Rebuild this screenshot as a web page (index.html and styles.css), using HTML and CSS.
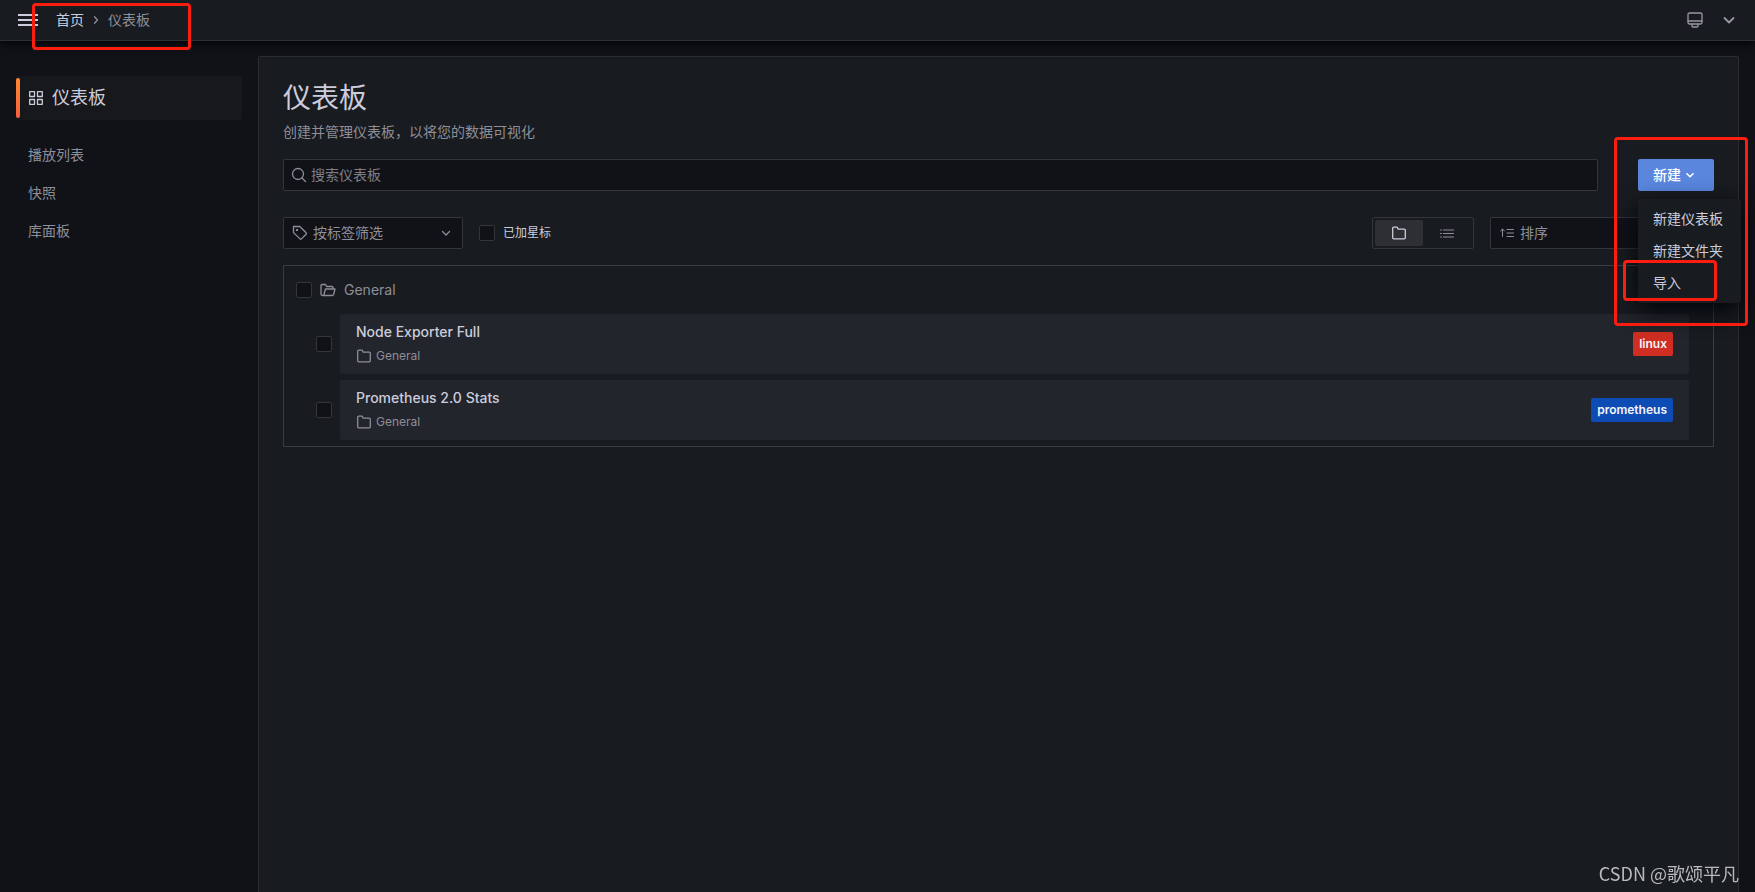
FILE: index.html
```html
<!DOCTYPE html>
<html lang="zh-CN">
<head>
    <meta charset="utf-8">
    <title>仪表板</title>
    <link rel="stylesheet" href="styles.css">
</head>
<body>

<!-- shared icons -->
<svg class="sprite" aria-hidden="true">
    <symbol id="i-down" viewBox="0 0 16 16">
        <path d="M4.500 6.500L8 10l3.500-3.500"/>
    </symbol>
    <symbol id="i-folder" viewBox="0 0 16 16">
        <path d="M1.700 3.200a1 1 0 0 1 1-1H6l1.200 2h6.100a1 1 0 0 1 1 1v7.600a1 1 0 0 1-1 1H2.700a1 1 0 0 1-1-1z"/>
    </symbol>
</svg>

<header class="topbar">
    <button class="icon-btn" aria-label="菜单">
        <svg class="menu-icon" viewBox="0 0 20 12"><path d="M0 1h20M0 6h20M0 11h20"/></svg>
    </button>
    <nav class="breadcrumb">
        <a href="#" class="home">首页</a>
        <svg class="icon sep" viewBox="0 0 16 16"><path d="M6.500 4.800L9.500 8l-3 3.200"/></svg>
        <a href="#">仪表板</a>
        <span class="mark mark-crumb"></span>
    </nav>
    <div class="top-actions">
        <button class="icon-btn" aria-label="显示器">
            <svg class="icon" viewBox="0 0 16 16"><rect x="1" y="1" width="14" height="11" rx="1.500"/><path d="M1 9h14M5 12.200v1.800a1 1 0 0 0 1 1h4a1 1 0 0 0 1-1v-1.800"/></svg>
        </button>
        <button class="icon-btn" aria-label="展开">
            <svg class="icon chev" viewBox="0 0 16 16"><path d="M3.500 6L8 10.500 12.500 6"/></svg>
        </button>
    </div>
</header>

<div class="page">
    <aside class="sidebar">
        <a href="#" class="side-title">
            <svg class="icon" viewBox="0 0 16 16"><path d="M1.700 1.700h4.800v4.800H1.700zM9.500 1.700h4.800v4.800H9.500zM1.700 9.500h4.800v4.800H1.700zM9.500 9.500h4.800v4.800H9.500z"/></svg>
            仪表板
        </a>
        <nav class="side-nav">
            <a href="#">播放列表</a>
            <a href="#">快照</a>
            <a href="#">库面板</a>
        </nav>
    </aside>

    <main class="panel">
        <h1>仪表板</h1>
        <p class="subtitle">创建并管理仪表板，以将您的数据可视化</p>

        <div class="search-row">
            <div class="field search">
                <svg class="icon" viewBox="0 0 16 16"><circle cx="7" cy="7" r="5.500"/><path d="M11 11l3.500 3.500"/></svg>
                <input type="text" placeholder="搜索仪表板" aria-label="搜索仪表板">
            </div>
            <div class="new">
                <button class="new-btn">新建<svg class="icon" aria-hidden="true"><use href="#i-down"/></svg></button>
                <div class="menu">
                    <a href="#">新建仪表板</a>
                    <a href="#">新建文件夹</a>
                    <a href="#">导入</a>
                    <span class="mark mark-import"></span>
                </div>
                <span class="mark mark-new"></span>
            </div>
        </div>

        <div class="filter-row">
            <div class="field tags">
                <svg class="icon" viewBox="0 0 16 16"><path d="M1.500 1.500h6.300l6.300 6.300a1 1 0 0 1 0 1.400l-4.700 4.700a1 1 0 0 1-1.400 0L1.500 7.600z"/><path d="M4.600 4.600h.8v.8h-.8z"/></svg>
                <select aria-label="按标签筛选"><option>按标签筛选</option></select>
                <svg class="icon" aria-hidden="true"><use href="#i-down"/></svg>
            </div>
            <label class="starred"><input type="checkbox">已加星标</label>
            <div class="layout">
                <label>
                    <input type="radio" name="layout" aria-label="文件夹视图" checked>
                    <svg class="icon" aria-hidden="true"><use href="#i-folder"/></svg>
                </label>
                <label>
                    <input type="radio" name="layout" aria-label="列表视图">
                    <svg class="icon thin" viewBox="0 0 16 16"><path d="M1.500 5h1M4.500 5h10M1.500 8.500h1M4.500 8.500h10M1.500 12h1M4.500 12h10"/></svg>
                </label>
            </div>
            <div class="field sort">
                <svg class="icon thin" viewBox="0 0 16 16"><path d="M3.500 11.500v-7M1.500 6l2-2 2 2M8 4.500h6.500M8 8h6.500M8 11.500h6.500"/></svg>
                <select aria-label="排序"><option>排序</option></select>
            </div>
        </div>

        <section class="folder">
            <div class="folder-head">
                <input type="checkbox" aria-label="General">
                <svg class="icon" viewBox="0 0 16 16"><path d="M2.500 13.500a1.500 1.500 0 0 1-1.500-1.500V3.500a1 1 0 0 1 1-1h3.500l1.200 2h5.300a1 1 0 0 1 1 1V7M2.500 13.500c.7 0 1.200-.4 1.400-1L5.500 7H15l-1.400 5.500c-.2.600-.6 1-1.300 1z"/></svg>
                <span>General</span>
            </div>
            <div class="item">
                <input type="checkbox" aria-label="Node Exporter Full">
                <div class="card">
                    <div>
                        <a href="#" class="name">Node Exporter Full</a>
                        <div class="loc"><svg class="icon" aria-hidden="true"><use href="#i-folder"/></svg>General</div>
                    </div>
                    <a href="#" class="tag red">linux</a>
                </div>
            </div>
            <div class="item">
                <input type="checkbox" aria-label="Prometheus 2.0 Stats">
                <div class="card">
                    <div>
                        <a href="#" class="name">Prometheus 2.0 Stats</a>
                        <div class="loc"><svg class="icon" aria-hidden="true"><use href="#i-folder"/></svg>General</div>
                    </div>
                    <a href="#" class="tag blue">prometheus</a>
                </div>
            </div>
        </section>
    </main>
</div>

<div class="watermark">CSDN @歌颂平凡</div>

</body>
</html>
```

FILE: styles.css
```css
* {
    box-sizing: border-box;
}
body {
    display: flex;
    flex-direction: column;
    min-height: 100vh;
    margin: 0;
    background: #111217;
    color: #ccccdc;
    font-family: Inter, "Noto Sans CJK SC", sans-serif;
    font-size: 14px;
    line-height: 22px;
}
a {
    color: inherit;
    text-decoration: none;
}
button, input, select {
    margin: 0;
    font: inherit;
    color: inherit;
}
.sprite {
    position: absolute;
    width: 0;
    height: 0;
}
.icon {
    flex: none;
    width: 16px;
    height: 16px;
    fill: none;
    stroke: currentColor;
    stroke-width: 1.3;
    stroke-linecap: round;
    stroke-linejoin: round;
}
.thin {
    stroke-width: 1;
}

/* top bar */
.topbar {
    position: relative;
    z-index: 1;
    display: flex;
    align-items: center;
    height: 41px;
    padding: 0 18px;
    background: #181b1f;
    border-bottom: 1px solid #2f3034;
    box-shadow: 0 3px 8px #010409;
}
.icon-btn {
    display: flex;
    padding: 0;
    background: none;
    border: none;
}
.menu-icon {
    width: 20px;
    height: 12px;
    stroke: #ccccdc;
    stroke-width: 2;
}
.breadcrumb {
    position: relative;
    display: flex;
    align-items: center;
    gap: 4px;
    margin-left: 18px;
    color: #8e8e99;
}
.breadcrumb .home {
    color: #ccccdc;
}
.top-actions {
    display: flex;
    gap: 18px;
    margin-left: auto;
    color: #9898a4;
}
.chev {
    stroke-width: 1.8;
}

/* sidebar */
.page {
    display: flex;
    flex: 1;
    gap: 16px;
    padding: 15px 16px 0;
}
.sidebar {
    width: 226px;
    padding-top: 20px;
}
.side-title {
    position: relative;
    display: flex;
    align-items: center;
    gap: 8px;
    height: 44px;
    padding-left: 12px;
    background: #17181b;
    border-radius: 2px;
    font-size: 18px;
}
.side-title::before {
    content: "";
    position: absolute;
    left: 0;
    top: 2px;
    bottom: 2px;
    width: 4px;
    border-radius: 2px;
    background: linear-gradient(#ff8833, #f55f3e);
}
.side-nav {
    display: flex;
    flex-direction: column;
    gap: 16px;
    padding: 24px 12px;
    color: #8e8e99;
}

/* content */
.panel {
    flex: 1;
    padding: 24px;
    background: #181b1f;
    border: 1px solid #2b2c31;
    border-bottom: none;
    border-radius: 2px 2px 0 0;
}
h1 {
    margin: 0;
    font-size: 28px;
    font-weight: 400;
    line-height: 34px;
}
.subtitle {
    margin: 6px 0 16px;
    color: #8e8e99;
}
.search-row, .filter-row {
    display: flex;
    align-items: center;
}
.search-row {
    gap: 40px;
}
.filter-row {
    gap: 16px;
    margin: 26px 0 16px;
}
.field {
    display: flex;
    align-items: center;
    gap: 5px;
    height: 32px;
    padding: 0 8px;
    background: #111217;
    border: 1px solid #34353a;
    border-radius: 2px;
    color: #8e8e99;
}
.field input, .field select {
    flex: 1;
    min-width: 0;
    padding: 0;
    background: none;
    border: none;
    outline: none;
    appearance: none;
}
.field input::placeholder {
    color: #7d7e87;
}
.search {
    flex: 1;
    gap: 4px;
    padding: 0 7px;
}
.tags {
    width: 180px;
}
.sort {
    width: 224px;
}
input[type="checkbox"] {
    flex: none;
    width: 16px;
    height: 16px;
    appearance: none;
    background: #111217;
    border: 1px solid #34353a;
    border-radius: 2px;
}
input[type="checkbox"]:checked {
    background: #5a86de;
}
.starred {
    display: flex;
    align-items: center;
    gap: 8px;
    font-size: 12px;
}
.layout {
    display: flex;
    height: 32px;
    margin-left: auto;
    padding: 2px;
    border: 1px solid #34353a;
    border-radius: 2px;
    color: #8e8e99;
}
.layout label {
    position: relative;
    display: flex;
    align-items: center;
    justify-content: center;
    width: 48px;
    border-radius: 2px;
}
.layout input {
    position: absolute;
    opacity: 0;
}
.layout label:has(:checked) {
    background: #2d2f34;
    color: #ccccdc;
}

/* new button and its menu */
.new {
    position: relative;
    z-index: 1;
}
.new-btn {
    display: flex;
    align-items: center;
    width: 76px;
    height: 32px;
    padding: 0 15px;
    background: #5a86de;
    border: none;
    border-radius: 2px;
    color: #fff;
    font-weight: 500;
}
.new-btn .icon {
    width: 14px;
    height: 14px;
    margin-left: 2px;
    stroke-width: 1.8;
}
.menu {
    position: absolute;
    top: 40px;
    left: 0;
    padding: 4px 0;
    background: #181b1f;
    border-radius: 2px;
    box-shadow: 0 8px 24px #010409;
    white-space: nowrap;
}
.menu a {
    display: block;
    padding: 5px 18px 5px 15px;
}

/* red highlight frames */
.mark {
    position: absolute;
    border: 3px solid #fb1e10;
    border-radius: 4px;
    pointer-events: none;
}
.mark-crumb {
    top: -6px;
    right: -41px;
    left: -24px;
    height: 47px;
}
.mark-new {
    top: -22px;
    right: -34px;
    left: -24px;
    height: 189px;
}
.mark-import {
    top: 61px;
    right: 24px;
    left: -15px;
    height: 41px;
}

/* results */
.folder {
    display: flex;
    flex-direction: column;
    gap: 6px;
    padding: 6px 24px 6px 12px;
    border: 1px solid #3c3d42;
}
.folder-head {
    display: flex;
    align-items: center;
    gap: 8px;
    height: 36px;
    color: #8e8e99;
}
.item {
    display: flex;
    align-items: center;
    gap: 8px;
    padding-left: 20px;
}
.card {
    display: flex;
    flex: 1;
    align-items: center;
    justify-content: space-between;
    height: 60px;
    padding: 0 16px;
    background: #22252b;
    border-radius: 2px;
}
.name {
    display: block;
    font-weight: 500;
}
.loc {
    display: flex;
    align-items: center;
    gap: 4px;
    margin-top: 2px;
    color: #8e8e99;
    font-size: 12px;
}
.tag {
    padding: 1px 6px;
    border-radius: 2px;
    color: #f4f5fa;
    font-size: 12px;
    font-weight: 600;
}
.red {
    background: #d02e22;
}
.blue {
    background: #0d4bb5;
}

.watermark {
    position: fixed;
    right: 16px;
    bottom: 8px;
    color: #b9babb;
    font-family: "Noto Sans CJK SC", sans-serif;
    font-size: 18px;
}
```
